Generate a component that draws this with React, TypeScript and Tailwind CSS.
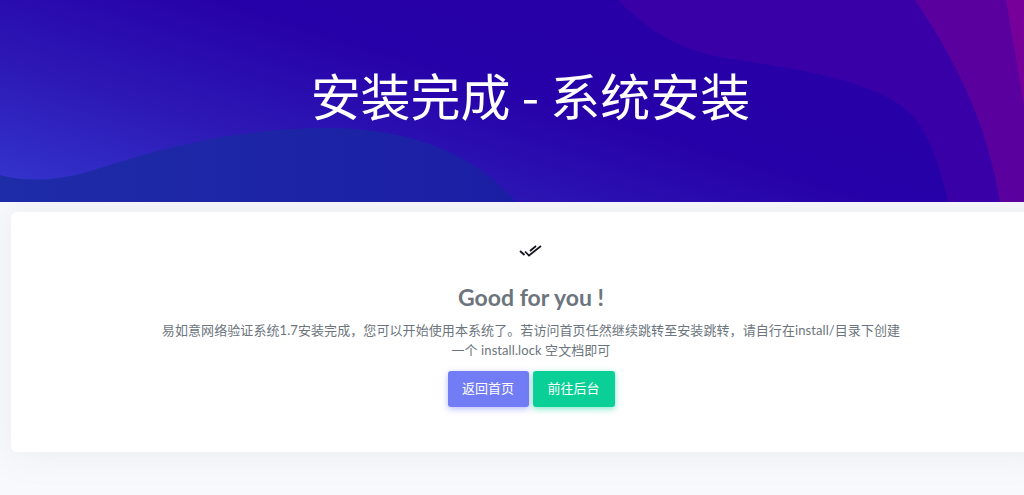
export default function App() {
  return (
    <div className="h-[495px] overflow-hidden bg-[#f8f9fc] font-['Lato','Noto_Sans_CJK_SC',sans-serif]">
      <div className="relative flex h-[202px] items-center justify-center overflow-hidden bg-[#2500a8] pb-[14px] pl-[37px]">
        <svg className="absolute inset-0" width="1024" height="202" viewBox="0 0 1024 202">
          <defs>
            <linearGradient id="base" x1="0" y1="1" x2="1" y2="0.35">
              <stop offset="0" stopColor="#3438d0" />
              <stop offset="0.32" stopColor="#2d18b5" />
              <stop offset="0.62" stopColor="#2600a8" />
              <stop offset="1" stopColor="#2800a6" />
            </linearGradient>
            <linearGradient id="wave" x1="0" y1="0" x2="1" y2="0">
              <stop offset="0" stopColor="#1e2ca8" />
              <stop offset="1" stopColor="#1b1ea4" />
            </linearGradient>
          </defs>
          <rect width="1024" height="202" fill="url(#base)" />
          <path d="M618 0C650 32 680 50 725 58C800 70 880 80 915 118C932 140 942 175 948 202H1024V0Z" fill="#3a00a8" />
          <path d="M915 0C945 45 985 110 1000 202H1024V0Z" fill="#5a009f" />
          <path d="M1006 0C1012 35 1018 70 1024 105V0Z" fill="#78009a" />
          <path d="M0 175C25 182 60 182 100 168C170 145 245 128 327 128C420 128 480 160 516 202H0Z" fill="url(#wave)" />
        </svg>
        <h1 className="relative text-[50px] leading-none font-normal text-white font-['Noto_Sans_CJK_SC',sans-serif]">
          安装完成 - 系统安装
        </h1>
      </div>
      <div className="mt-2.5 ml-[11px] flex h-[240px] w-[1040px] flex-col items-center rounded-md bg-white pt-[32px] shadow-[0_0_35px_rgba(154,161,171,0.15)]">
        <svg width="24" height="14" viewBox="0 0 24 14" fill="none" stroke="#14141c" strokeWidth="1.7">
          <path d="M1 7L5.5 11" />
          <path d="M6 7.5L10 11.5L22 2" />
          <path d="M11 7L17 2" />
        </svg>
        <h2 className="mt-[26px] text-[23px] leading-[26px] font-bold text-[#6c757d]">Good for you !</h2>
        <p className="mt-[10px] w-[745px] text-center text-[13px] leading-[20px] tracking-[0.08px] text-[#6c757d]">
          易如意网络验证系统1.7安装完成，您可以开始使用本系统了。若访问首页任然继续跳转至安装跳转，请自行在install/目录下创建一个 install.lock 空文档即可
        </p>
        <div className="mt-[11px] flex gap-1">
          <button className="h-9 w-[81px] rounded-[3px] bg-[#727cf5] text-[13px] text-white shadow-[0_2px_6px_0_rgba(114,124,245,0.5)]">
            返回首页
          </button>
          <button className="h-9 w-[82px] rounded-[3px] bg-[#0acf97] text-[13px] text-white shadow-[0_2px_6px_0_rgba(10,207,151,0.5)]">
            前往后台
          </button>
        </div>
      </div>
    </div>
  );
}
